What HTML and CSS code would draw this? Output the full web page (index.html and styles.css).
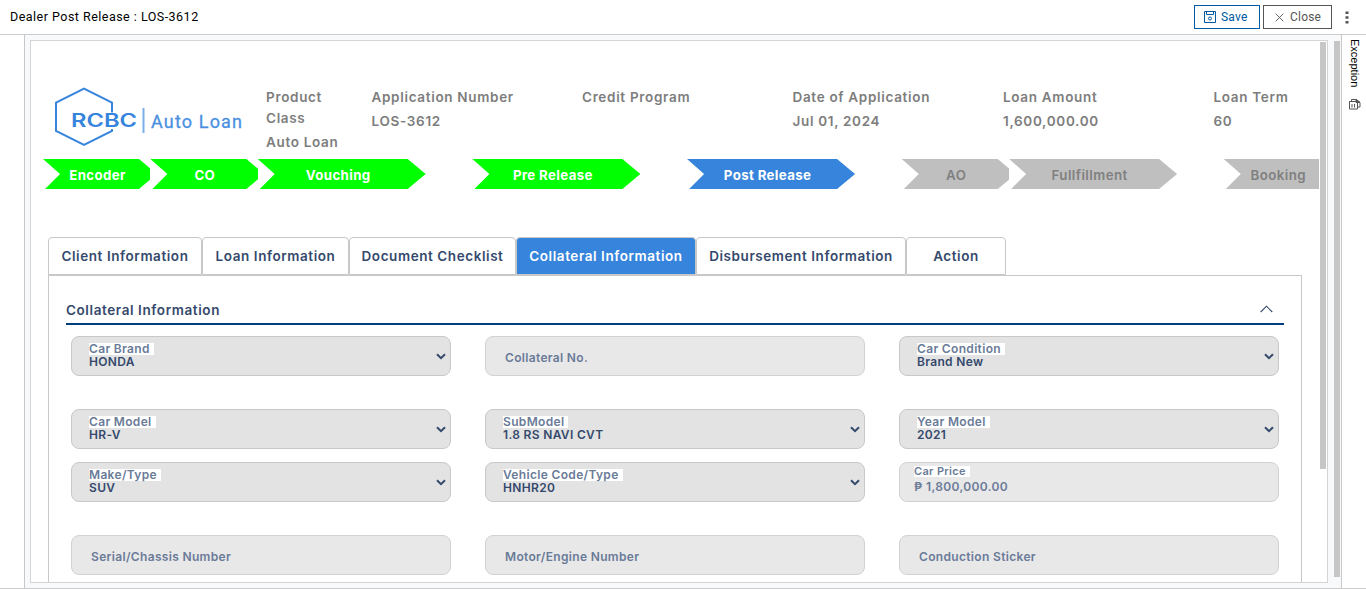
FILE: index.html
```
<!DOCTYPE html>
<html lang="en">
<head>
<meta charset="utf-8">
<title>Dealer Post Release</title>
<link rel="stylesheet" href="styles.css">
</head>
<body>
<div class="app">
  <header class="topbar">
    <div class="title">Dealer Post Release : LOS-3612</div>
    <button class="btn save"><svg width="12" height="12" viewBox="0 0 12 12" fill="none" stroke="currentColor"><path d="M.5.5h11v11H.5zM2.5.5v3h7v-3"/><circle cx="6" cy="7.5" r="1.5"/></svg>Save</button>
    <button class="btn close"><svg width="9" height="9" viewBox="0 0 9 9" fill="none" stroke="currentColor" stroke-width=".9"><path d="M.7.7l7.6 7.6M8.3.7L.7 8.3"/></svg>Close</button>
    <svg class="dots" width="4" height="13" viewBox="0 0 4 13"><path d="M.5.5h3v2.600h-3zM.5 5.200h3v2.600h-3zM.5 9.900h3v2.600h-3z" fill="#555"/></svg>
  </header>
  <div class="body">
    <div class="left"></div>
    <main class="center">
      <div class="frame">
        <div class="content">
          <section class="summary">
            <svg class="logo" width="190" height="62" viewBox="0 0 190 62">
              <path d="M59 26.500V16.500L31 2.500 3 16.500v28.500l28 14 28-14v-2" fill="none" stroke="#3684dc" stroke-width="2"/>
              <text class="brand" x="18" y="41" textLength="66" lengthAdjust="spacingAndGlyphs">RCBC</text>
              <path d="M90.500 22v25" stroke="#78ade8" stroke-width="2"/>
              <text class="product" x="98" y="41.500" textLength="91" lengthAdjust="spacing">Auto Loan</text>
            </svg>
            <dl class="cls"><dt>Product Class</dt><dd>Auto Loan</dd></dl>
            <dl><dt>Application Number</dt><dd>LOS-3612</dd></dl>
            <dl><dt>Credit Program</dt><dd></dd></dl>
            <dl><dt>Date of Application</dt><dd>Jul 01, 2024</dd></dl>
            <dl><dt>Loan Amount</dt><dd>1,600,000.00</dd></dl>
            <dl class="last"><dt>Loan Term</dt><dd>60</dd></dl>
          </section>
          <nav class="steps">
            <div class="step short done"><span>Encoder</span></div>
            <div class="step short done"><span>CO</span></div>
            <div class="step done"><span>Vouching</span></div>
            <div class="step done"><span>Pre Release</span></div>
            <div class="step current"><span>Post Release</span></div>
            <div class="step short"><span>AO</span></div>
            <div class="step"><span>Fullfillment</span></div>
            <div class="step short"><span>Booking</span></div>
          </nav>
          <nav class="tabs">
            <div class="tab t1">Client Information</div>
            <div class="tab t2">Loan Information</div>
            <div class="tab t3">Document Checklist</div>
            <div class="tab t4 active">Collateral Information</div>
            <div class="tab t5">Disbursement Information</div>
            <div class="tab t6">Action</div>
          </nav>
          <section class="panel">
            <div class="heading"><h2>Collateral Information</h2><svg width="13" height="8" viewBox="0 0 13 8" fill="none" stroke="#34496c" stroke-width="1.100"><path d="M.7 7L6.500 1.200 12.300 7"/></svg></div>
            <div class="fields">
              <div class="field select"><label>Car Brand</label><b>HONDA</b><svg class="chev" width="10" height="7" viewBox="0 0 10 7"><path d="M1 1.200l4 4 4-4"/></svg></div>
              <div class="field"><span>Collateral No.</span></div>
              <div class="field select"><label>Car Condition</label><b>Brand New</b><svg class="chev" width="10" height="7" viewBox="0 0 10 7"><path d="M1 1.200l4 4 4-4"/></svg></div>
              <div class="field select"><label>Car Model</label><b>HR-V</b><svg class="chev" width="10" height="7" viewBox="0 0 10 7"><path d="M1 1.200l4 4 4-4"/></svg></div>
              <div class="field select"><label>SubModel</label><b>1.8 RS NAVI CVT</b><svg class="chev" width="10" height="7" viewBox="0 0 10 7"><path d="M1 1.200l4 4 4-4"/></svg></div>
              <div class="field select"><label>Year Model</label><b>2021</b><svg class="chev" width="10" height="7" viewBox="0 0 10 7"><path d="M1 1.200l4 4 4-4"/></svg></div>
              <div class="field select"><label>Make/Type</label><b>SUV</b><svg class="chev" width="10" height="7" viewBox="0 0 10 7"><path d="M1 1.200l4 4 4-4"/></svg></div>
              <div class="field select"><label>Vehicle Code/Type</label><b>HNHR20</b><svg class="chev" width="10" height="7" viewBox="0 0 10 7"><path d="M1 1.200l4 4 4-4"/></svg></div>
              <div class="field price"><label>Car Price</label><em>₱ 1,800,000.00</em></div>
              <div class="field"><span>Serial/Chassis Number</span></div>
              <div class="field"><span>Motor/Engine Number</span></div>
              <div class="field"><span>Conduction Sticker</span></div>
            </div>
          </section>
        </div>
        <div class="track"><div class="thumb"></div></div>
      </div>
      <div class="outer-thumb"></div>
    </main>
    <aside class="right">
      <div class="exception">Exception</div>
      <svg width="12" height="11" viewBox="0 0 12 11" fill="none" stroke="#555"><path d="M.5 2.500h8v7.500h-8zM2.500 2.500v-2h5l3.500 3v4.500h-2.500M3 5v3.500M5.500 5v3.500"/><path d="M7 .5v3h4z" fill="#555"/></svg>
    </aside>
  </div>
</div>
</body>
</html>
```
FILE: styles.css
```
* { box-sizing: border-box; }
body { margin: 0; background: #fff; font-family: Inter, "Liberation Sans", sans-serif; overflow: hidden; }
.app { height: 589px; display: flex; flex-direction: column; border-bottom: 1px solid #ccc; }
.topbar { height: 35px; flex: none; border-bottom: 1px solid #ccc; display: flex; align-items: flex-start; padding: 5px 17px 0 10px; font-family: Roboto, sans-serif; }
.title { flex: 1; font-size: 12.500px; line-height: 14px; padding-top: 5px; color: #000; letter-spacing: .48px; }
.btn { height: 24px; padding: 0 0 0 9px; display: flex; align-items: center; background: #fff; border: 1px solid; font: 12px Roboto, sans-serif; letter-spacing: .2px; line-height: 25px; }
.save { width: 66px; gap: 5px; color: #0059a3; margin-right: 3px; }
.close { width: 69px; gap: 6px; padding-left: 11px; color: #555; margin-right: 13px; }
.dots { margin-top: 6px; }
.body { flex: 1; min-height: 0; display: flex; }
.left { width: 25px; border-right: 1px solid #c8c8c8; flex: none; }
.center { flex: 1; background: #f8f9fb; padding: 5px 1px 5px 5px; display: flex; gap: 6px; min-width: 0; }
.frame { width: 1298px; flex: none; border: 1px solid #d3d4d6; background: #fff; display: flex; overflow: hidden; }
.content { width: 1288px; flex: none; padding-left: 12px; overflow: hidden; }
.track { width: 7px; padding-top: 1px; margin-left: 1px; }
.thumb { width: 6px; height: 427px; background: #c6c6c6; }
.outer-thumb { width: 6px; height: 536px; margin-top: 1px; background: #c6c6c6; }
.right { width: 25px; flex: none; border-left: 1px solid #c8c8c8; padding: 4px 0 0 1px; display: flex; flex-direction: column; align-items: center; gap: 12px; }
.exception { writing-mode: vertical-rl; font: 11px/12px "Liberation Sans", sans-serif; color: #000; height: 48px; }
.summary { height: 118px; display: flex; padding: 45px 0 0 10px; color: #7d7d7d; font-size: 13.500px; font-weight: 600; }
.logo { width: 190px; flex: none; margin-right: 23px; }
.brand { font: 600 18px Inter, sans-serif; fill: #3684dc; }
.product { font: 400 18px Roboto, sans-serif; fill: #4a90df; stroke: #4a90df; stroke-width: .3px; }
dl { margin: 0; width: 210.500px; flex: none; line-height: 21px; letter-spacing: .68px; padding-top: 1px; }
.cls { width: 105.500px; padding-right: 30px; }
.last { width: 95px; }
dt, dd { margin: 0; }
dd { padding-top: 3px; }
.steps { display: flex; width: 1276px; overflow: hidden; height: 30px; }
.step { width: 214.700px; flex: none; overflow: hidden; color: #808080; font-size: 13.300px; font-weight: 600; letter-spacing: .45px; }
.step span { display: block; width: 168px; height: 30px; line-height: 32px; text-align: center; padding-right: 7px; background: #bfbfbf; clip-path: polygon(0 0, calc(100% - 18px) 0, 100% 50%, calc(100% - 18px) 100%, 2px 100%, 17px 50%); }
.short { width: 107.350px; }
.short span { width: 114px; padding-right: 5px; }
.done, .current { color: #fff; font-weight: 700; letter-spacing: .35px; }
.done span { background: #0f0; }
.current span { background: #3684dc; }
.tabs { display: flex; margin: 48px 0 0 5px; }
.tab { height: 38px; border: 1px solid #c8c8c8; border-radius: 4px 4px 0 0; color: #34496c; font-size: 13.500px; line-height: 36px; text-align: center; font-weight: 600; letter-spacing: .57px; white-space: nowrap; }
.t1 { width: 154px; } .t2 { width: 147px; } .t3 { width: 167px; } .t4 { width: 180px; } .t5 { width: 210px; } .t6 { width: 100px; }
.active { background: #3684dc; color: #fff; }
.panel { margin-left: 5px; width: 1254px; height: 400px; border: 1px solid #c8c8c8; padding: 21px 17px 0; }
.heading { height: 28px; border-bottom: 2px solid #003e7e; display: flex; justify-content: space-between; padding: 0 11px 0 0; }
.heading svg { margin-top: 8px; }
h2 { margin: 0; font-size: 13.500px; line-height: 26px; font-weight: 600; letter-spacing: .6px; color: #34496c; }
.fields { display: grid; grid-template-columns: repeat(3, 380px); grid-template-rows: 73px 53px 73px 40px; column-gap: 34px; padding: 11px 0 0 5px; color: #6a7b98; font-size: 12px; font-weight: 600; letter-spacing: .33px; }
.field { height: 40px; border: 1px solid #d2d2d2; border-radius: 8px; background: #e8e8e8; position: relative; padding: 0 19px; line-height: 41px; }
.select { background: #e3e3e3; border-color: #c8c8c8; padding: 6px 17px; }
.select label { display: block; width: fit-content; height: 12px; line-height: 12px; background: #fff; padding-right: 4px; }
.select b { display: block; line-height: 14px; font-weight: 600; color: #34496c; }
.chev { position: absolute; right: 4px; top: 16px; fill: none; stroke: #34496c; stroke-width: 2; }
.price { padding: 3px 14px; }
.price label { display: block; width: fit-content; height: 11px; line-height: 11px; font-size: 11px; background: #fff; padding-right: 4px; }
.price em { display: block; font-style: normal; line-height: 20px; }
```
